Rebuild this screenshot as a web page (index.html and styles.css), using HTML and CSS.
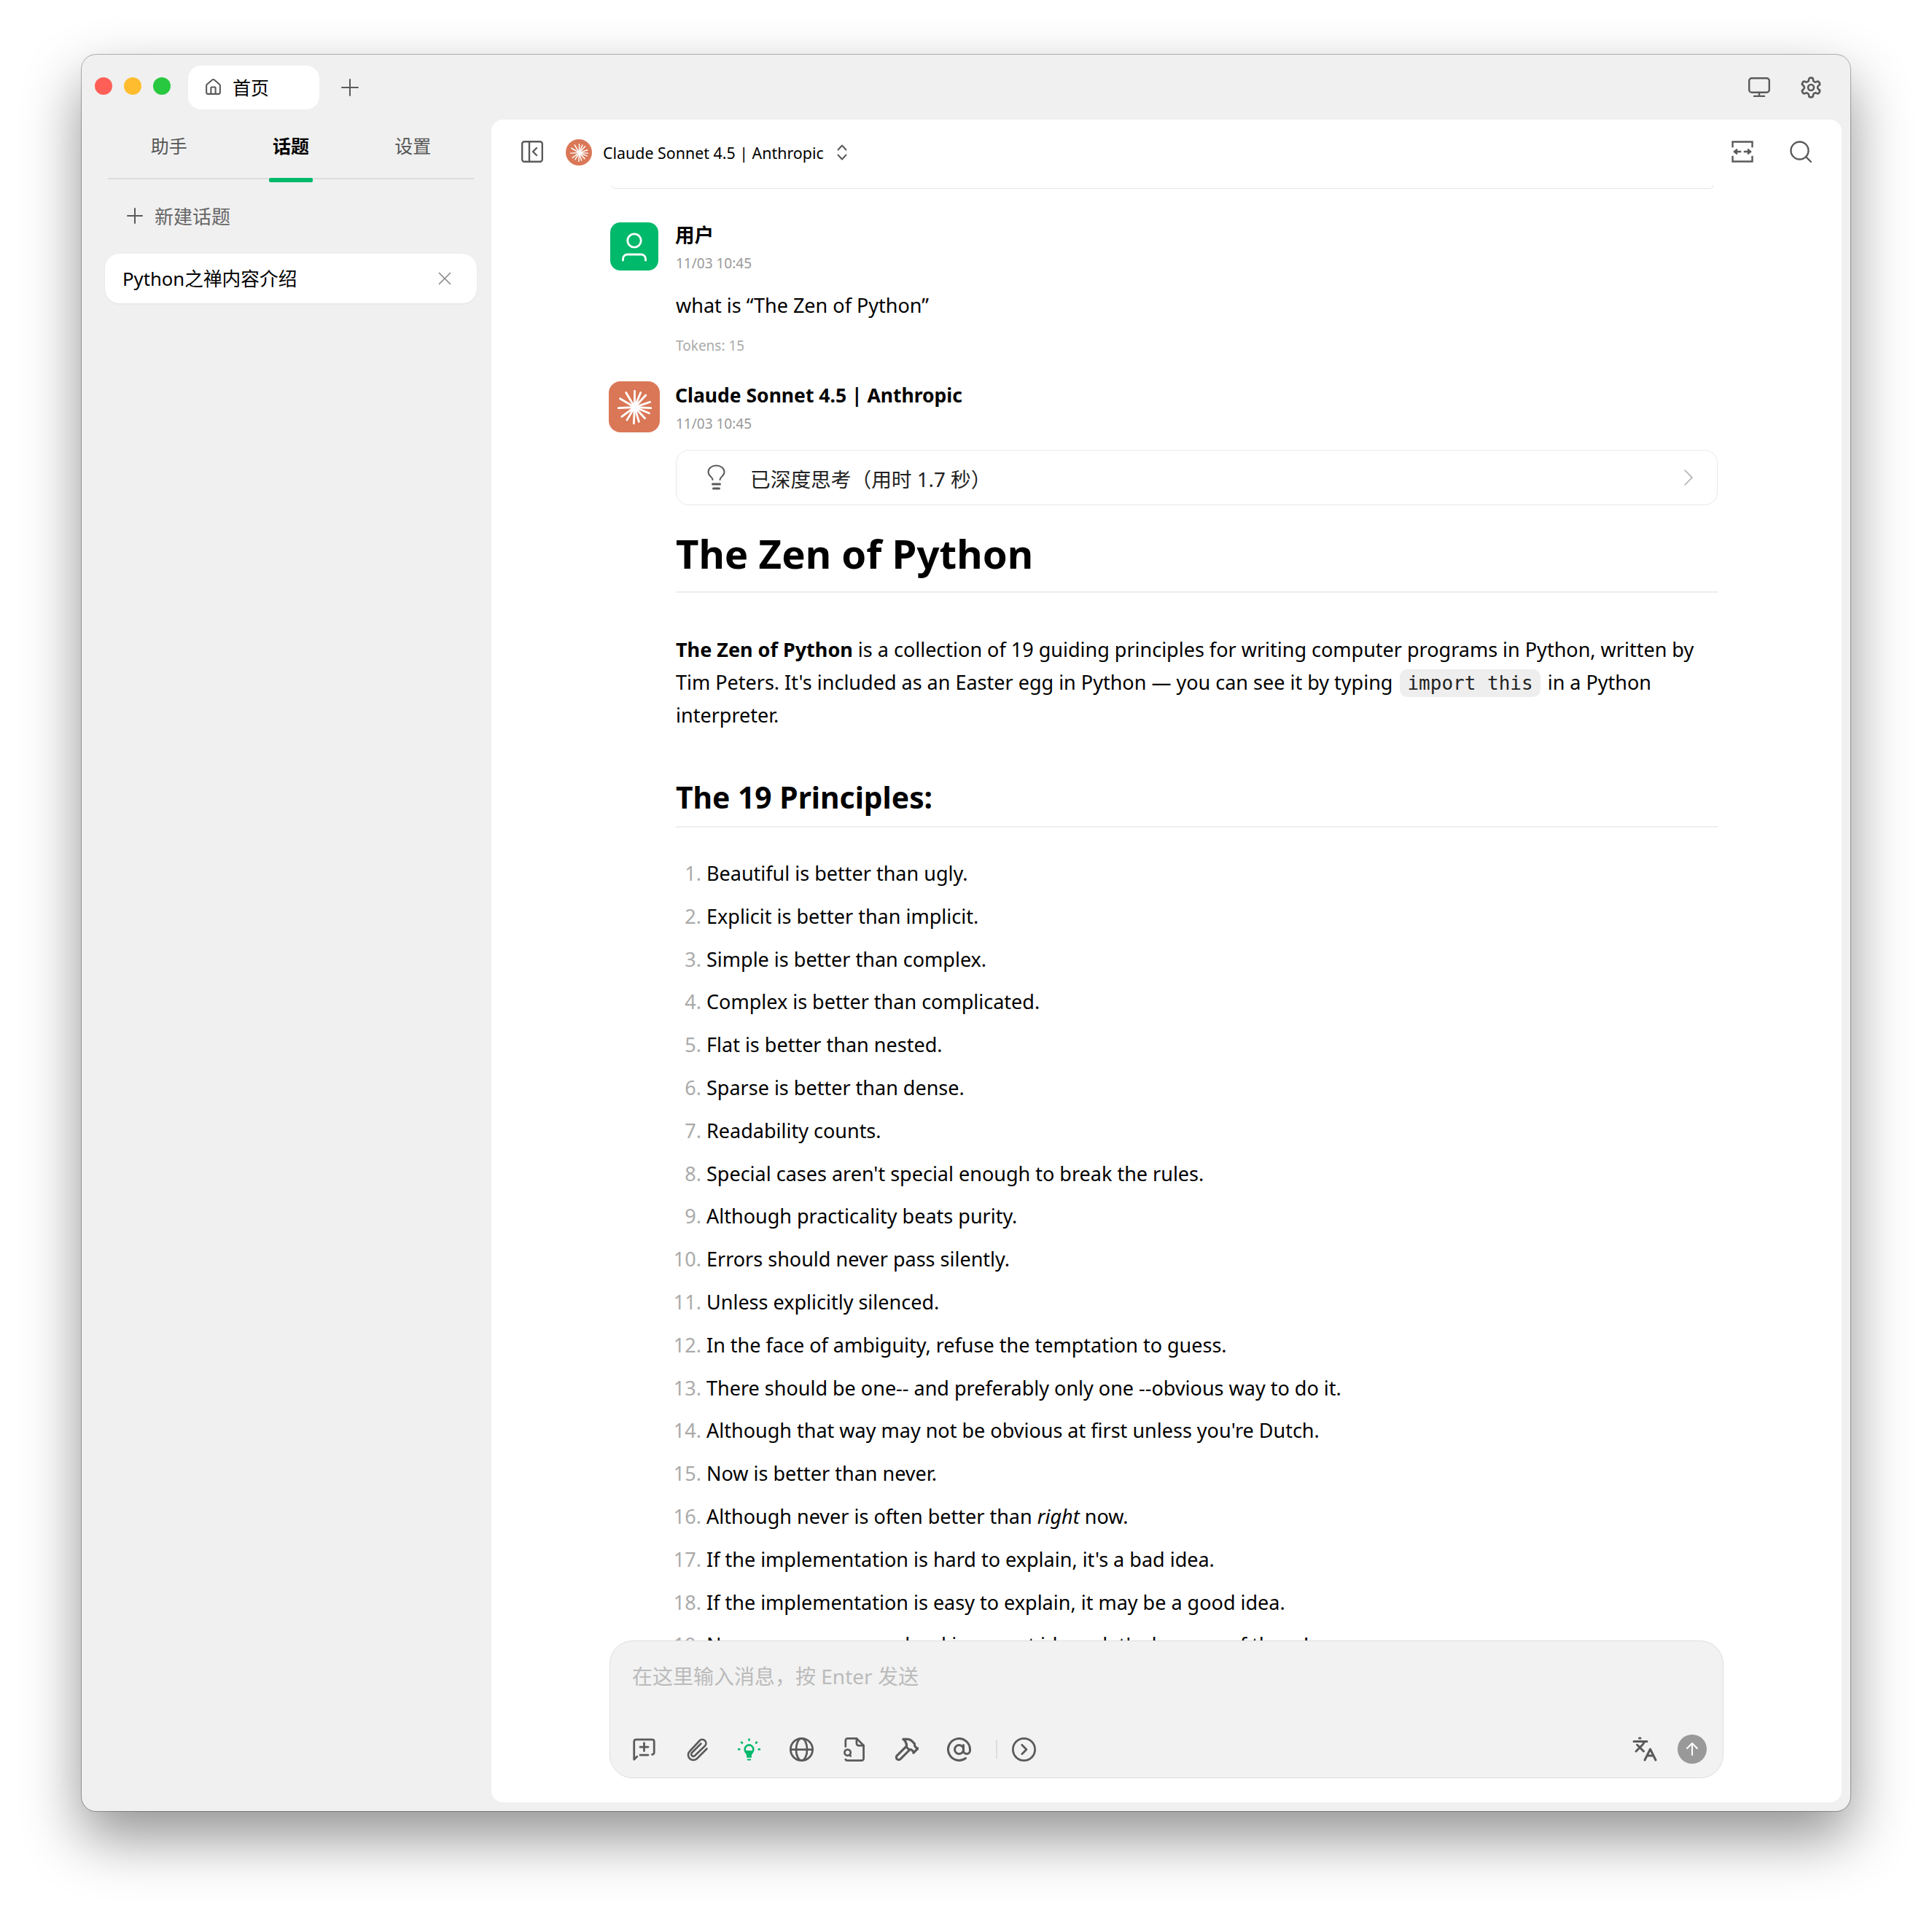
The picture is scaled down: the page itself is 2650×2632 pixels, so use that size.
FILE: index.html
```html
<!DOCTYPE html>
<html lang="zh-CN">
<head>
  <meta charset="UTF-8" />
  <title>Cherry Studio</title>
  <link rel="stylesheet" href="styles.css">
</head>
<body>
  <svg class="defs" width="0" height="0">
    <symbol id="burst" viewBox="0 0 40 40">
      <g stroke="#fff" stroke-width="2.4" stroke-linecap="round">
        <line x1="20" y1="20" x2="20" y2="1"/><line x1="20" y1="20" x2="27" y2="3"/>
        <line x1="20" y1="20" x2="33" y2="6"/><line x1="20" y1="20" x2="38" y2="14"/>
        <line x1="20" y1="20" x2="39" y2="21"/><line x1="20" y1="20" x2="37" y2="27"/>
        <line x1="20" y1="20" x2="32" y2="33"/><line x1="20" y1="20" x2="25" y2="37"/>
        <line x1="20" y1="20" x2="19" y2="39"/><line x1="20" y1="20" x2="11" y2="35"/>
        <line x1="20" y1="20" x2="5" y2="31"/><line x1="20" y1="20" x2="1" y2="21"/>
        <line x1="20" y1="20" x2="3" y2="10"/><line x1="20" y1="20" x2="10" y2="3"/>
      </g>
    </symbol>
  </svg>

  <div class="window">
    <div class="titlebar">
      <div class="lights">
        <span class="light red"></span>
        <span class="light yellow"></span>
        <span class="light green"></span>
      </div>
      <div class="home-tab">
        <svg class="ic home-ic" viewBox="0 0 24 24"><path d="M3 10a2 2 0 0 1 .709-1.528l7-5.999a2 2 0 0 1 2.582 0l7 5.999A2 2 0 0 1 21 10v9a2 2 0 0 1-2 2H5a2 2 0 0 1-2-2z"/><path d="M15 21v-8a1 1 0 0 0-1-1h-4a1 1 0 0 0-1 1v8"/></svg>
        <span>首页</span>
      </div>
      <svg class="ic add-tab" viewBox="0 0 24 24"><path d="M12 1v22M1 12h22"/></svg>
      <div class="title-actions">
        <svg class="ic monitor-ic" viewBox="0 0 30 27"><rect x="1.200" y="1.200" width="27.600" height="19.600" rx="3.500"/><path d="M15 21v5M8 26h14"/></svg>
        <svg class="ic gear-ic" viewBox="0 0 24 24"><path d="M12.22 2h-.44a2 2 0 0 0-2 2v.18a2 2 0 0 1-1 1.73l-.43.25a2 2 0 0 1-2 0l-.15-.08a2 2 0 0 0-2.73.73l-.22.38a2 2 0 0 0 .73 2.73l.15.1a2 2 0 0 1 1 1.72v.51a2 2 0 0 1-1 1.74l-.15.09a2 2 0 0 0-.73 2.73l.22.38a2 2 0 0 0 2.73.73l.15-.08a2 2 0 0 1 2 0l.43.25a2 2 0 0 1 1 1.73V20a2 2 0 0 0 2 2h.44a2 2 0 0 0 2-2v-.18a2 2 0 0 1 1-1.73l.43-.25a2 2 0 0 1 2 0l.15.08a2 2 0 0 0 2.73-.73l.22-.39a2 2 0 0 0-.73-2.73l-.15-.08a2 2 0 0 1-1-1.74v-.5a2 2 0 0 1 1-1.74l.15-.09a2 2 0 0 0 .73-2.73l-.22-.38a2 2 0 0 0-2.73-.73l-.15.08a2 2 0 0 1-2 0l-.43-.25a2 2 0 0 1-1-1.73V4a2 2 0 0 0-2-2z"/><circle cx="12" cy="12" r="3"/></svg>
      </div>
    </div>

    <div class="content">
      <aside class="sidebar">
        <div class="side-tabs">
          <div class="side-tab">助手</div>
          <div class="side-tab active">话题</div>
          <div class="side-tab">设置</div>
        </div>
        <div class="new-topic">
          <svg class="ic" viewBox="0 0 24 24"><path d="M12 2v20M2 12h20"/></svg>
          <span>新建话题</span>
        </div>
        <div class="topic">
          <span>Python之禅内容介绍</span>
          <svg class="ic topic-close" viewBox="0 0 24 24"><path d="M3 3l18 18M21 3L3 21"/></svg>
        </div>
      </aside>

      <main class="main">
        <header class="main-head">
          <svg class="ic panel-ic" viewBox="0 0 30 30"><rect x="1.200" y="1.200" width="27.600" height="27.600" rx="3"/><path d="M11 1v28M21 10l-5 5 5 5"/></svg>
          <span class="model-dot"><svg width="25" height="25"><use href="#burst"/></svg></span>
          <span class="model-name">Claude Sonnet 4.5 | Anthropic</span>
          <svg class="ic updown-ic" viewBox="0 0 14 22"><path d="M1.500 7.500L7 1.500l5.500 6M1.500 14.500l5.500 6 5.500-6"/></svg>
          <div class="head-actions">
            <svg class="ic expand-ic" viewBox="0 0 30 30"><path d="M1.500 8V1.500h27V8M1.500 22v6.500h27V22"/><path d="M12 15H4M7 12.500L4 15l3 2.500M18 15h8M23 12.500l3 2.500-3 2.500"/></svg>
            <svg class="ic search-ic" viewBox="0 0 30 30"><circle cx="13.500" cy="13.500" r="12"/><path d="M22 22l7 7"/></svg>
          </div>
        </header>

        <div class="messages">
          <div class="prev-edge"></div>

          <section class="msg user-msg">
            <div class="msg-head">
              <div class="avatar user-avatar">
                <svg class="ic" viewBox="0 0 66 66"><circle cx="33" cy="25" r="9.200"/><path d="M17.500 52v-2a6 6 0 0 1 6-6h19a6 6 0 0 1 6 6v2"/></svg>
              </div>
              <div>
                <div class="msg-name">用户</div>
                <div class="msg-time">11/03 10:45</div>
              </div>
            </div>
            <div class="msg-body">
              <p class="user-text">what is “The Zen of Python”</p>
              <div class="tokens">Tokens: 15</div>
            </div>
          </section>

          <section class="msg">
            <div class="msg-head">
              <div class="avatar claude-avatar"><svg width="47" height="47"><use href="#burst"/></svg></div>
              <div>
                <div class="msg-name bold">Claude Sonnet 4.5 | Anthropic</div>
                <div class="msg-time">11/03 10:45</div>
              </div>
            </div>
            <div class="msg-body">
              <div class="thinking">
                <svg class="ic bulb-ic" viewBox="0 0 24 36"><path d="M17 21c.3-1.600 1-2.700 2.400-4.100C21.500 15 23 13 23 10.500 23 5 18 1.500 12 1.500S1 5 1 10.500C1 13 2.500 15 4.600 16.900 6 18.300 6.700 19.400 7 21"/><path d="M7 27h10M8 33h8" class="thick"/></svg>
                <span class="thinking-text">已深度思考（用时 1.7 秒）</span>
                <svg class="ic thinking-arrow" viewBox="0 0 12 22"><path d="M1 1l10 10L1 21"/></svg>
              </div>

              <article class="md">
                <h1>The Zen of Python</h1>
                <p><strong>The Zen of Python</strong> is a collection of 19 guiding principles for writing computer programs in Python, written by<br>Tim Peters. It's included as an Easter egg in Python — you can see it by typing <code>import this</code> in a Python<br>interpreter.</p>
                <h2>The 19 Principles:</h2>
                <ol>
                  <li>Beautiful is better than ugly.</li>
                  <li>Explicit is better than implicit.</li>
                  <li>Simple is better than complex.</li>
                  <li>Complex is better than complicated.</li>
                  <li>Flat is better than nested.</li>
                  <li>Sparse is better than dense.</li>
                  <li>Readability counts.</li>
                  <li>Special cases aren't special enough to break the rules.</li>
                  <li>Although practicality beats purity.</li>
                  <li>Errors should never pass silently.</li>
                  <li>Unless explicitly silenced.</li>
                  <li>In the face of ambiguity, refuse the temptation to guess.</li>
                  <li>There should be one-- and preferably only one --obvious way to do it.</li>
                  <li>Although that way may not be obvious at first unless you're Dutch.</li>
                  <li>Now is better than never.</li>
                  <li>Although never is often better than <em>right</em> now.</li>
                  <li>If the implementation is hard to explain, it's a bad idea.</li>
                  <li>If the implementation is easy to explain, it may be a good idea.</li>
                  <li>Namespaces are one honking great idea -- let's do more of those!</li>
                </ol>
              </article>
            </div>
          </section>
        </div>

        <div class="composer">
          <div class="placeholder">在这里输入消息，按 Enter 发送</div>
          <div class="composer-bar">
            <svg class="ic tool" viewBox="0 0 24 24"><path d="M5 19l-3 3V4a2 2 0 0 1 2-2h16a2 2 0 0 1 2 2v11a2 2 0 0 1-2 2"/><path d="M8 9.500h8M12 5.500v8M8 17.500h8"/></svg>
            <svg class="ic tool clip-ic" viewBox="0 0 32 33"><path d="M30 15.500L16.500 29a7 7 0 0 1-10-10L20 4.500a5 5 0 0 1 7.500 7L13.500 25a2.800 2.800 0 0 1-4-4L22 8.500"/></svg>
            <svg class="tool bulb-on" viewBox="0 0 34 32"><path class="ray" d="M17 .5V4M5.500 5L8 7.500M28.500 5L26 7.500M1 15.700h3.500M29.500 15.700H33"/><circle class="bulb-ring" cx="17" cy="15.700" r="6"/><path class="bulb-fill" d="M10.500 17.500h13c0 3-3 4.500-3 8v2h-7v-2c0-3.500-3-5-3-8zM14 29.500h6l-.8 2h-4.400z"/></svg>
            <svg class="ic tool" viewBox="0 0 24 24"><circle cx="12" cy="12" r="11"/><ellipse cx="12" cy="12" rx="5.500" ry="11"/><path d="M1 12h22"/></svg>
            <svg class="ic tool" viewBox="0 0 24 24"><path d="M14.500 1v5a2 2 0 0 0 2 2h5"/><path d="M3.500 9V3a2 2 0 0 1 2-2h9l7 7v13a2 2 0 0 1-2 2H5a2 2 0 0 1-1.500-1"/><circle cx="5.500" cy="15" r="3"/><path d="M8.500 18.500l-.9-1.300"/></svg>
            <svg class="ic tool" viewBox="1.500 1.500 21 21"><path d="M15 12l-8.373 8.373a1 1 0 1 1-3-3L12 9"/><path d="M18 15l4-4"/><path d="M21.500 11.500l-1.914-1.914A2 2 0 0 1 19 8.172V7l-2.260-2.260a6 6 0 0 0-4.202-1.756L9 2.960l.92.820A6.180 6.180 0 0 1 12 8.400V10l2 2h1.172a2 2 0 0 1 1.414.586L18.500 14.500"/></svg>
            <svg class="ic tool" viewBox="1 1 22 22"><circle cx="12" cy="12" r="4"/><path d="M16 8v5a3 3 0 0 0 6 0v-1a10 10 0 1 0-4 8"/></svg>
            <span class="tool-sep"></span>
            <svg class="ic tool" viewBox="0 0 24 24"><circle cx="12" cy="12" r="11"/><path d="M10 7.500l4.500 4.500-4.500 4.500"/></svg>
            <div class="composer-right">
              <svg class="ic translate-ic" viewBox="0 0 24 24"><path d="M5 8l6 6M4 14l6-6 2-3M2 5h12M7 2h1M22 22l-5-10-5 10M14 18h6"/></svg>
              <span class="send-btn"><svg class="ic" viewBox="0 0 24 24"><path d="M12 20V4M5 11l7-7 7 7"/></svg></span>
            </div>
          </div>
        </div>
      </main>
    </div>
  </div>
</body>
</html>
```

FILE: styles.css
```css
* {
  box-sizing: border-box;
}
body {
  margin: 0;
  padding: 75px 112px 0;
  height: 2632px;
  overflow: hidden;
  background-color: #ffffff;
  color: #000000;
  font-family: "Noto Sans", "Noto Sans CJK SC", sans-serif;
}
.defs {
  position: absolute;
}
.ic {
  display: block;
  flex: none;
  fill: none;
  stroke: #5a5a5a;
  stroke-width: 2;
  stroke-linecap: round;
  stroke-linejoin: round;
}

.window {
  width: 2426px;
  height: 2409px;
  display: flex;
  flex-direction: column;
  background-color: #f0f0f0;
  border-radius: 20px;
  box-shadow: 0 0 0 1px rgba(0, 0, 0, 0.28), 0 36px 80px 0 rgba(0, 0, 0, 0.43);
}

/* title bar */
.titlebar {
  height: 89px;
  display: flex;
  align-items: center;
  padding: 0 38px 0 18px;
  flex: none;
}
.lights {
  display: flex;
  gap: 16px;
  margin-right: 24px;
  margin-top: -3px;
}
.light {
  width: 24px;
  height: 24px;
  border-radius: 50%;
}
.light.red { background-color: #ff5f57; }
.light.yellow { background-color: #febc2e; }
.light.green { background-color: #28c840; }
.home-tab {
  width: 180px;
  height: 60px;
  margin-top: 1px;
  display: flex;
  align-items: center;
  gap: 14px;
  padding: 0 0 2px 22px;
  background-color: #ffffff;
  border-radius: 18px;
  font-size: 25px;
}
.home-ic {
  width: 25px;
  height: 25px;
}
.add-tab {
  width: 24px;
  height: 24px;
  margin-left: 30px;
  margin-top: 1px;
}
.title-actions {
  margin-left: auto;
  display: flex;
  align-items: center;
  gap: 40px;
}
.monitor-ic {
  width: 30px;
  height: 27px;
  stroke-width: 2.4;
}
.gear-ic {
  width: 32px;
  height: 32px;
}

/* sidebar */
.content {
  flex: 1;
  display: flex;
  min-height: 0;
}
.sidebar {
  width: 562px;
  flex: none;
  padding: 0 20px 0 32px;
}
.side-tabs {
  display: flex;
  height: 82px;
  margin: 0 4px;
  border-bottom: 2px solid #dcdcdc;
}
.side-tab {
  flex: 1;
  text-align: center;
  font-size: 25px;
  line-height: 72px;
  color: #555555;
  position: relative;
}
.side-tab.active {
  color: #000000;
  font-weight: 700;
}
.side-tab.active::after {
  content: "";
  position: absolute;
  left: 50%;
  bottom: -6px;
  width: 60px;
  height: 6px;
  margin-left: -30px;
  background-color: #00b96b;
  border-radius: 2px;
}
.new-topic {
  display: flex;
  align-items: center;
  gap: 15px;
  height: 52px;
  margin: 25px 0;
  padding: 0 0 2px 29px;
  font-size: 26px;
  color: #666666;
}
.new-topic .ic {
  width: 24px;
  height: 24px;
}
.topic {
  height: 68px;
  display: flex;
  align-items: center;
  justify-content: space-between;
  padding: 0 34px 2px 24px;
  background-color: #ffffff;
  border-radius: 20px;
  box-shadow: 0 1px 3px rgba(0, 0, 0, 0.06);
  font-size: 25.7px;
}
.topic-close {
  width: 20px;
  height: 20px;
  margin-top: 2px;
  stroke: #888888;
}

/* main panel */
.main {
  flex: 1;
  min-width: 0;
  margin: 0 12px 12px 0;
  display: flex;
  flex-direction: column;
  background-color: #ffffff;
  border-radius: 16px;
  overflow: hidden;
}
.main-head {
  height: 90px;
  flex: none;
  display: flex;
  align-items: center;
  padding: 0 41px;
}
.panel-ic {
  width: 30px;
  height: 30px;
  margin-top: -3px;
  stroke-width: 2.4;
}
.model-dot {
  width: 36px;
  height: 36px;
  margin-left: 31px;
  display: flex;
  align-items: center;
  justify-content: center;
  background-color: #da7756;
  border-radius: 50%;
}
.model-name {
  margin-left: 15px;
  font-size: 21.4px;
}
.updown-ic {
  width: 14px;
  height: 22px;
  margin-left: 18px;
}
.head-actions {
  margin: -3px 0 0 auto;
  display: flex;
  align-items: center;
  gap: 50px;
}
.expand-ic {
  width: 30px;
  height: 30px;
  stroke-width: 2.4;
  stroke-linecap: square;
  stroke-linejoin: miter;
}
.search-ic {
  width: 30px;
  height: 30px;
  stroke-width: 2.4;
}

/* messages */
.messages {
  flex: 1;
  min-height: 0;
  overflow: hidden;
  padding: 0 170px 0 161px;
}
.prev-edge {
  height: 5px;
  border: 1px solid #e5e5e5;
  border-top: 0;
  border-radius: 0 0 20px 20px;
  margin: 0 6px 46px 4px;
}
.msg-head {
  display: flex;
  gap: 21px;
  align-items: flex-start;
}
.avatar {
  width: 66px;
  height: 66px;
  flex: none;
  display: flex;
  align-items: center;
  justify-content: center;
  border-radius: 14px;
}
.user-avatar {
  margin-left: 2px;
  margin-right: 2px;
  background-color: #00b96b;
}
.user-avatar .ic {
  width: 66px;
  height: 66px;
  stroke: #ffffff;
  stroke-width: 2.8;
}
.claude-avatar {
  width: 70px;
  height: 70px;
  background-color: #da7756;
  border-radius: 16px;
}
.msg-name {
  font-size: 26.5px;
  line-height: 34px;
  font-weight: 600;
}
.msg-name.bold {
  font-size: 26.5px;
  line-height: 38px;
  font-weight: 700;
}
.msg-time {
  margin: 9px 0 0 1px;
  font-size: 19px;
  line-height: 26px;
  color: #999999;
}
.msg-name.bold + .msg-time {
  margin-top: 7px;
}
.msg-body {
  margin-left: 92px;
}
.user-text {
  margin: 23px 0 0;
  font-size: 27px;
  line-height: 44px;
}
.tokens {
  margin-top: 20px;
  height: 26px;
  font-size: 19px;
  line-height: 26px;
  color: #aaaaaa;
}
.user-msg {
  margin-bottom: 36px;
}
.thinking {
  height: 76px;
  margin-top: 23px;
  display: flex;
  align-items: center;
  padding: 0 33px 0 42px;
  border: 1px solid #e8e8e8;
  border-radius: 18px;
  font-size: 27.7px;
  color: #222222;
}
.thinking-text {
  padding-top: 2px;
}
.bulb-ic {
  width: 25px;
  height: 36px;
  margin-right: 34px;
}
.thick {
  stroke-width: 3;
}
.thinking-arrow {
  width: 12px;
  height: 22px;
  margin-left: auto;
  stroke: #aaaaaa;
  stroke-width: 1.5;
}

/* markdown */
.md h1 {
  margin: 28px 0 0;
  padding-bottom: 14px;
  border-bottom: 2px solid #eeeeee;
  font-size: 54.5px;
  line-height: 76px;
  font-weight: 700;
}
.md p {
  margin: 55px 0 0;
  font-size: 27px;
  line-height: 45px;
}
.md code {
  margin: 0 3px;
  padding: 4px 10px;
  background-color: #eeeeee;
  border-radius: 10px;
  font-family: "DejaVu Sans Mono", monospace;
  font-size: 26px;
  line-height: 1;
  color: #222222;
}
.md h2 {
  margin: 61px 0 0;
  padding-bottom: 11px;
  border-bottom: 2px solid #eeeeee;
  font-size: 40.8px;
  line-height: 58px;
  font-weight: 700;
}
.md ol {
  margin: 40px 0 0;
  padding-left: 42px;
  font-size: 27px;
  line-height: 45px;
}
.md li {
  margin-bottom: 13.8px;
}
.md li::marker {
  color: #aaaaaa;
}

/* composer */
.composer {
  height: 189px;
  flex: none;
  margin: 0 162px 33px;
  padding: 30px 30px 0;
  background-color: #f2f2f2;
  border: 1px solid #dddddd;
  border-radius: 32px;
}
.placeholder {
  font-size: 28px;
  line-height: 36px;
  color: #bbbbbb;
}
.composer-bar {
  margin-top: 60px;
  height: 44px;
  display: flex;
  align-items: center;
  gap: 39px;
}
.tool {
  width: 33px;
  height: 33px;
}
.clip-ic {
  stroke-width: 2.6;
}
.bulb-on {
  flex: none;
  fill: none;
}
.ray {
  stroke: #00b96b;
  stroke-width: 2.7;
}
.bulb-ring {
  stroke: #00b96b;
  stroke-width: 2.6;
}
.bulb-fill {
  fill: #00b96b;
}
.tool-sep {
  width: 2px;
  height: 26px;
  margin: 0 -19px 0 -5px;
  background-color: #dddddd;
}
.composer-right {
  margin-left: auto;
  display: flex;
  align-items: center;
  gap: 27px;
  margin-right: -8px;
}
.translate-ic {
  width: 36px;
  height: 36px;
}
.send-btn {
  width: 40px;
  height: 40px;
  display: flex;
  align-items: center;
  justify-content: center;
  background-color: #999999;
  border-radius: 50%;
}
.send-btn .ic {
  width: 24px;
  height: 24px;
  stroke: #ffffff;
}
```
